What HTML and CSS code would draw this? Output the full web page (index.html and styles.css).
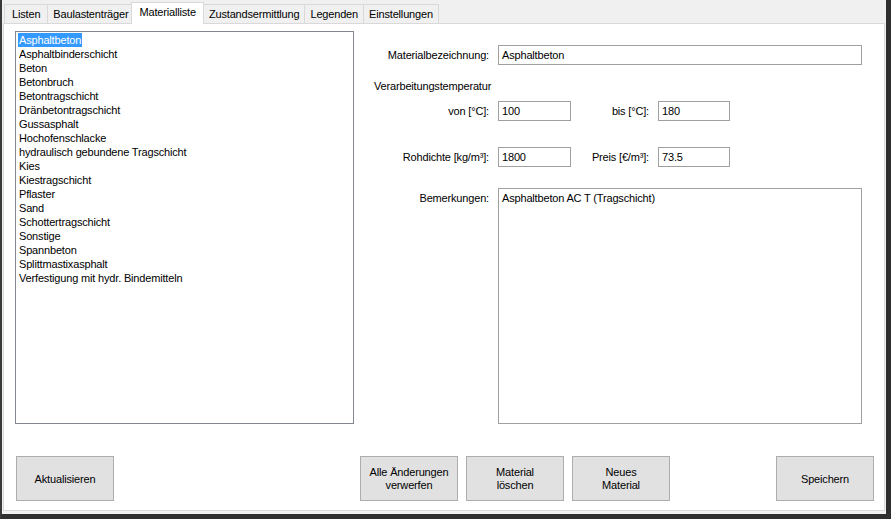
FILE: index.html
```html
<!DOCTYPE html>
<html lang="de">
<head>
<meta charset="utf-8">
<title>Materialliste</title>
<link rel="stylesheet" href="styles.css">
</head>
<body>
<div class="window">
  <div class="tabs">
    <div class="tab first">Listen</div>
    <div class="tab">Baulastenträger</div>
    <div class="tab active">Materialliste</div>
    <div class="tab">Zustandsermittlung</div>
    <div class="tab">Legenden</div>
    <div class="tab">Einstellungen</div>
  </div>
  <div class="page">
    <div class="main">
      <div class="list">
        <div class="item selected">Asphaltbeton</div>
        <div class="item">Asphaltbinderschicht</div>
        <div class="item">Beton</div>
        <div class="item">Betonbruch</div>
        <div class="item">Betontragschicht</div>
        <div class="item">Dränbetontragschicht</div>
        <div class="item">Gussasphalt</div>
        <div class="item">Hochofenschlacke</div>
        <div class="item">hydraulisch gebundene Tragschicht</div>
        <div class="item">Kies</div>
        <div class="item">Kiestragschicht</div>
        <div class="item">Pflaster</div>
        <div class="item">Sand</div>
        <div class="item">Schottertragschicht</div>
        <div class="item">Sonstige</div>
        <div class="item">Spannbeton</div>
        <div class="item">Splittmastixasphalt</div>
        <div class="item">Verfestigung mit hydr. Bindemitteln</div>
      </div>
      <div class="form">
        <div class="row r-name">
          <div class="label">Materialbezeichnung:</div>
          <div class="box wide">Asphaltbeton</div>
        </div>
        <div class="section">Verarbeitungstemperatur</div>
        <div class="row r-temp">
          <div class="label">von [°C]:</div>
          <div class="box small">100</div>
          <div class="label2">bis [°C]:</div>
          <div class="box small2">180</div>
        </div>
        <div class="row r-dens">
          <div class="label">Rohdichte [kg/m³]:</div>
          <div class="box small">1800</div>
          <div class="label2">Preis [€/m³]:</div>
          <div class="box small2">73.5</div>
        </div>
        <div class="row r-notes">
          <div class="label top">Bemerkungen:</div>
          <div class="box area">Asphaltbeton AC T (Tragschicht)</div>
        </div>
      </div>
    </div>
    <div class="buttons">
      <div class="btn">Aktualisieren</div>
      <div class="btn b-discard">Alle Änderungen<br>verwerfen</div>
      <div class="btn b-del">Material<br>löschen</div>
      <div class="btn b-new">Neues<br>Material</div>
      <div class="btn b-save">Speichern</div>
    </div>
  </div>
</div>
</body>
</html>
```

FILE: styles.css
```css
* { box-sizing: border-box; }
html, body { margin: 0; padding: 0; }
body {
  font-family: "Liberation Sans", Arial, sans-serif;
  font-size: 11px;
  letter-spacing: -0.17px;
  color: #000;
  background: #f0f0f0;
}
.window {
  width: 891px;
  height: 519px;
  background: #f0f0f0;
  border-left: 2px solid #3a3a3a;
  border-right: 5px solid #2e2e2e;
  border-bottom: 5px solid #2e2e2e;
  padding: 2px 0 0 1px;
  display: flex;
  flex-direction: column;
}
.tabs {
  display: flex;
  height: 21px;
  padding-left: 1px;
  align-items: flex-end;
}
.tab {
  height: 19px;
  padding: 0 5px;
  border: 1px solid #d9d9d9;
  border-bottom: none;
  margin-right: -1px;
  background: #f0f0f0;
  line-height: 18px;
}
.tab.first { padding: 0 7px; }
.tab.active {
  height: 22px;
  background: #fff;
  margin: 0 0 -1px -2px;
  padding: 0 7px;
  line-height: 19px;
  position: relative;
  z-index: 1;
  border-color: #d9d9d9;
}
.tab.active + .tab { margin-left: -1px; }
.page {
  width: 882px;
  height: 488px;
  background: #fff;
  border: 1px solid #d9d9d9;
  display: flex;
  flex-direction: column;
  padding: 7px 0 0 11px;
}
.main { display: flex; }
.list {
  width: 339px;
  height: 393px;
  border: 1px solid #828790;
  padding: 1px 2px;
}
.item {
  height: 14px;
  line-height: 14px;
  padding-left: 1px;
  white-space: nowrap;
}
.item.selected {
  background: #3399ff;
  color: #fff;
  display: inline-block;
  padding-right: 1px;
}
.form {
  margin-left: 6px;
  display: flex;
  flex-direction: column;
}
.row { display: flex; align-items: center; }
.label {
  width: 130px;
  text-align: right;
  padding-right: 1px;
  margin-right: 8px;
}
.label.top { align-self: flex-start; padding-top: 4px; }
.label2 {
  width: 78px;
  text-align: right;
  margin-right: 9px;
}
.box {
  height: 20px;
  border: 1px solid #a0a0a0;
  padding: 2px 3px;
  line-height: 14px;
  background: #fff;
}
.wide { width: 364px; }
.small { width: 73px; }
.small2 { width: 72px; }
.area { width: 364px; height: 236px; padding-top: 2px; }
.r-name { margin-top: 14px; }
.section { margin-top: 14px; padding-left: 14px; line-height: 14px; }
.r-temp { margin-top: 8px; }
.r-dens { margin-top: 26px; }
.r-notes { margin-top: 21px; align-items: flex-start; }
.buttons {
  display: flex;
  margin-top: 32px;
  padding-left: 1px;
}
.btn {
  width: 98px;
  height: 45px;
  background: #e1e1e1;
  border: 1px solid #adadad;
  display: flex;
  align-items: center;
  justify-content: center;
  text-align: center;
  line-height: 13px;
  padding-top: 1px;
}
.b-discard { margin-left: 246px; }
.b-del { margin-left: 8px; }
.b-new { margin-left: 8px; }
.b-save { margin-left: 106px; }
```
